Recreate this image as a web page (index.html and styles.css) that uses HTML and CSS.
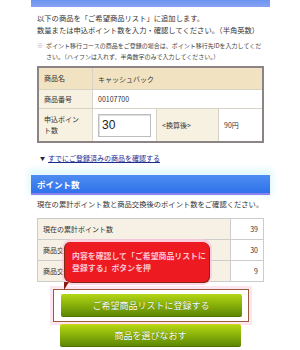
FILE: index.html
```html
<!DOCTYPE html>
<html lang="ja">
<head>
  <meta charset="UTF-8">
  <title>ご希望商品リスト</title>
  <link rel="stylesheet" href="styles.css">
</head>
<body>
  <div class="page">
    <div class="top-bar"></div>

    <!-- 商品確認 -->
    <div class="section">
      <p class="lead">以下の商品を「ご希望商品リスト」に追加します。<br>数量または申込ポイント数を入力・確認してください。（半角英数）</p>
      <p class="note"><span class="mark">※</span>ポイント移行コースの商品をご登録の場合は、ポイント移行先IDを入力してください。（ハイフンは入れず、半角数字のみで入力してください。）</p>

      <table class="item-table">
        <tr class="row-name">
          <th>商品名</th>
          <td colspan="3">キャッシュバック</td>
        </tr>
        <tr class="row-code">
          <th>商品番号</th>
          <td colspan="3">00107700</td>
        </tr>
        <tr class="row-point">
          <th>申込ポイン<br>ト数</th>
          <td class="input-cell"><input type="text" class="point-input" value="30"></td>
          <td class="sub-label">&lt;換算後&gt;</td>
          <td class="yen">90円</td>
        </tr>
      </table>

      <p class="more"><span class="arrow">▼</span><a href="#">すでにご登録済みの商品を確認する</a></p>
    </div>

    <!-- ポイント数 -->
    <h2 class="section-title">ポイント数</h2>
    <div class="section points">
      <p class="lead">現在の累計ポイント数と商品交換後のポイント数をご確認ください。</p>
      <table class="point-table">
        <tr><th>現在の累計ポイント数</th><td>39</td></tr>
        <tr><th>商品交換に必要なポイント数</th><td>30</td></tr>
        <tr><th>商品交換後のポイント数</th><td>9</td></tr>
      </table>

      <div class="tip">内容を確認して「ご希望商品リストに<br>登録する」ボタンを押</div>

      <div class="actions">
        <div class="focus">
          <button class="btn">ご希望商品リストに登録する</button>
        </div>
        <button class="btn">商品を選びなおす</button>
      </div>
    </div>
  </div>
</body>
</html>
```

FILE: styles.css
```css
body {
  margin: 0;
  background-color: #ffffff;
  font-family: "Noto Sans CJK JP", "Noto Sans", sans-serif;
  color: #333333;
}
.page {
  width: 239px;
  margin-left: 31px;
}
.top-bar {
  height: 7px;
  background: linear-gradient(#6c94f0, #86a2f2);
}
.section {
  padding: 0 6px;
}
p {
  margin: 0;
}
.lead {
  font-size: 7.3px;
  line-height: 12px;
  padding-top: 5px;
  white-space: nowrap;
}
.note {
  margin-top: 4px;
  padding-left: 9px;
  text-indent: -9px;
  font-size: 6px;
  line-height: 11px;
  color: #444444;
}
.note .mark {
  display: inline-block;
  width: 9px;
  text-indent: 0;
  color: #c8a0a8;
}
.item-table {
  margin-top: 4px;
  width: 227px;
  border-collapse: collapse;
  border: 2px solid #8c8484;
  font-size: 7px;
}
.item-table th,
.item-table td {
  border: 1px solid #d9d2c6;
  padding: 0 5px;
  text-align: left;
  font-weight: normal;
}
.item-table th {
  width: 43px;
  background-color: #f7f1e2;
  line-height: 11px;
}
.row-name th,
.row-name td {
  height: 21px;
  background-color: #f1e3c2;
}
.row-code td {
  height: 18px;
  background-color: #ffffff;
}
.row-point th,
.row-point td {
  height: 32px;
}
.input-cell {
  width: 52px;
}
.point-input {
  display: block;
  box-sizing: border-box;
  width: 53px;
  height: 23px;
  margin: 0;
  padding: 0 3px;
  border: 1px solid #bdbdbd;
  box-shadow: inset 1px 1px 1px #dddddd;
  font-family: "Liberation Sans", sans-serif;
  font-size: 12px;
  color: #222222;
}
.item-table .sub-label {
  width: 51px;
  background-color: #f7f1e2;
}
.item-table .yen {
  background-color: #ffffff;
}
.more {
  margin-top: 9px;
  font-size: 7px;
  line-height: 12px;
}
.more .arrow {
  display: inline-block;
  width: 8px;
  margin-left: 3px;
  font-size: 5px;
  vertical-align: 1px;
  color: #222244;
}
.more a {
  color: #1d2c93;
}
.section-title {
  margin: 11px 0 0;
  height: 18px;
  padding-left: 6px;
  background: linear-gradient(#4e8cf2, #2f72ea);
  border-bottom: 2px solid #8c82ee;
  box-shadow: 0 -3px 6px 3px #e3f8fb;
  color: #ffffff;
  font-size: 8.5px;
  font-weight: bold;
  line-height: 19px;
}
.points {
  position: relative;
}
.points .lead {
  padding-top: 3px;
}
.point-table {
  margin-top: 8px;
  width: 227px;
  border-collapse: collapse;
  font-size: 7px;
}
.point-table th,
.point-table td {
  height: 20px;
  border: 1px solid #cccccc;
  padding: 0 5px;
}
.point-table th {
  text-align: left;
  font-weight: normal;
  background-color: #f6f1e4;
}
.point-table td {
  width: 22px;
  text-align: right;
  background-color: #ffffff;
}
.tip {
  position: absolute;
  left: 34px;
  top: 47px;
  width: 144px;
  height: 40px;
  box-sizing: border-box;
  padding: 8px 0 0 7px;
  background-color: #ee1a22;
  border-radius: 6px;
  box-shadow: 1px 1px 0 #7e2c14, -1px 0 0 #7e2c14, 0 0 0 3px rgba(255, 196, 222, 0.7);
  color: #ffc4d2;
  font-size: 7.9px;
  font-weight: bold;
  line-height: 12px;
  white-space: nowrap;
}
.tip::after {
  content: "";
  position: absolute;
  left: -1px;
  bottom: -8px;
  border-left: 5px solid #8a1c12;
  border-bottom: 8px solid transparent;
}
.actions {
  display: flex;
  flex-direction: column;
  align-items: center;
  margin-top: 7px;
  gap: 2px;
}
.focus {
  padding: 4px 6px 4px 7px;
  border: 1.5px solid #9b5a3c;
  box-shadow: 0 0 0 3px #fde6f0;
  background-color: #ffffff;
}
.btn {
  display: block;
  width: 181px;
  height: 23px;
  padding: 0;
  border: none;
  border-bottom: 1px solid #4d7400;
  border-radius: 2px;
  background: linear-gradient(#b4d614, #88b00a 50%, #5c8804);
  color: #ffffff;
  font-family: "Noto Sans CJK JP", sans-serif;
  font-size: 9px;
  text-shadow: 0 0 1px #4a6a00;
  cursor: pointer;
}
.actions > .btn {
  border-top: 1px solid #d6d21a;
}
```
